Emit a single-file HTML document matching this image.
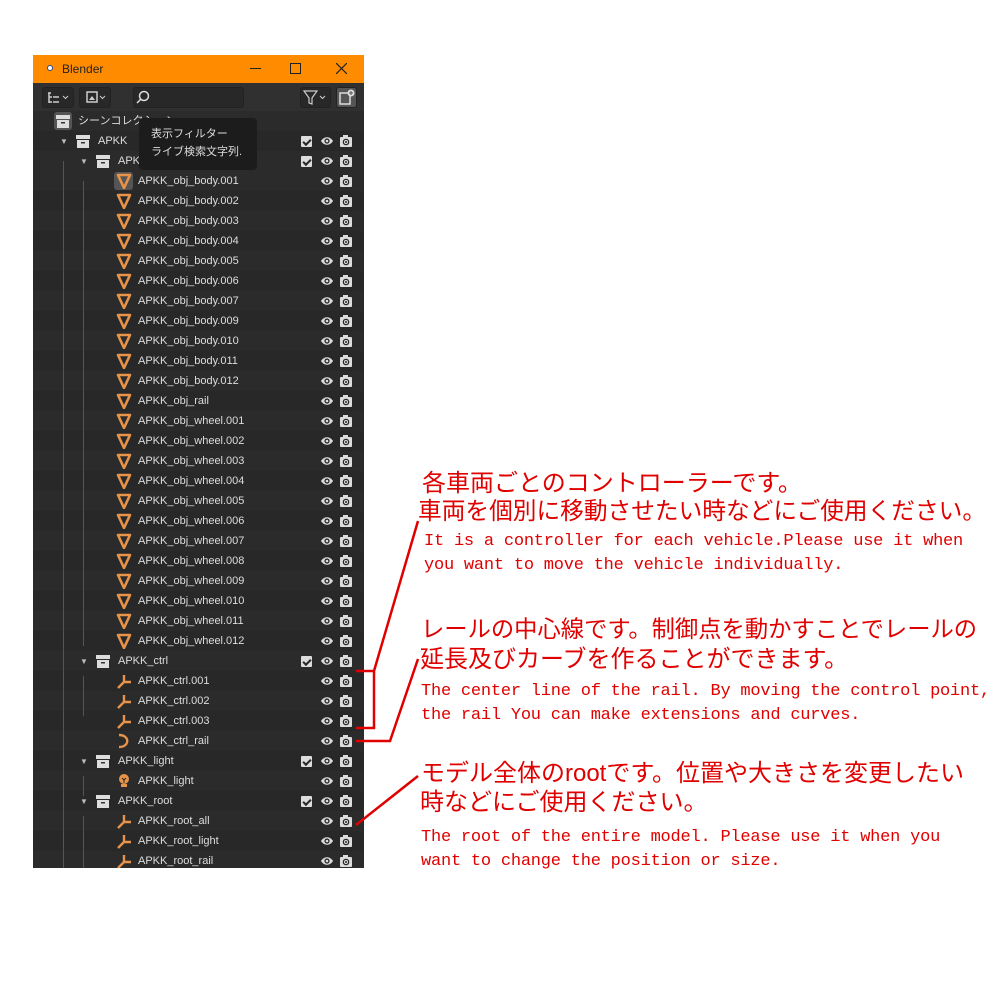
<!DOCTYPE html>
<html><head><meta charset="utf-8"><style>
body{margin:0;width:1000px;height:1000px;background:#fff;position:relative;overflow:hidden;font-family:"Liberation Sans","Noto Sans CJK JP",sans-serif}
#p{position:absolute;left:33px;top:55px;width:331px;height:813px;background:#282828;overflow:hidden}
#t{position:absolute;left:0;top:0;width:331px;height:28px;background:#ff8c00;color:#222;font-size:12px}
#h{position:absolute;left:0;top:28px;width:331px;height:28px;background:#303030}
.r{position:absolute;left:0;width:331px;height:20px;color:#ddd;font-size:11px;line-height:21px}
.r:nth-child(odd){background:#2b2b2b}
.r span{position:absolute}
.ic{position:absolute;top:2px}
.tri{position:absolute;top:0;color:#bbb;font-size:8px}
.eye{position:absolute;left:287px;top:4px}
.cam{position:absolute;left:306px;top:3px}
.chk{position:absolute;left:268px;top:5px;width:11px;height:11px;background:#ddd;border-radius:1px}
.chk:after{content:"";position:absolute;left:2px;top:3px;width:6px;height:3px;border-left:2px solid #282828;border-bottom:2px solid #282828;transform:rotate(-45deg)}
.vl{position:absolute;width:1px;background:#555}
.btn{position:absolute;top:4px;height:19px;background:#282828;border-radius:3px;border:1px solid #222}
.jp{position:absolute;color:#e00000;font-size:24px;font-family:"Liberation Sans","Noto Sans CJK JP",sans-serif;white-space:nowrap;line-height:29px}
.en{position:absolute;color:#e00000;font-size:17px;font-family:"Liberation Mono",monospace;white-space:nowrap;line-height:24px;letter-spacing:-0.22px}
</style></head><body>
<svg width="0" height="0" style="position:absolute">
<defs>
<symbol id="mesh" viewBox="0 0 16 16"><path d="M2 2H14L8 15Z" fill="none" stroke="#e8934a" stroke-width="2.6" stroke-linejoin="round"/></symbol>
<symbol id="emp" viewBox="0 0 16 16"><path d="M8 9V2M8 9H15M8 9L2 15" fill="none" stroke="#e8934a" stroke-width="2.4"/></symbol>
<symbol id="crv" viewBox="0 0 16 16"><path d="M3 2C14 2 14 14 3 14" fill="none" stroke="#e8934a" stroke-width="2.4"/></symbol>
<symbol id="lgt" viewBox="0 0 16 16"><circle cx="8" cy="6" r="5" fill="#e8934a"/><rect x="5" y="11" width="6" height="3" fill="#e8934a"/><path d="M6 5L8 7L10 5M8 7V10" stroke="#282828" stroke-width="1" fill="none"/></symbol>
<symbol id="col" viewBox="0 0 16 16"><rect x="1" y="2" width="14" height="4" fill="#ddd"/><rect x="2" y="7" width="12" height="8" fill="#ddd"/><rect x="6" y="9" width="4" height="1.5" fill="#333"/></symbol>
<symbol id="eye" viewBox="0 0 14 12"><path d="M1 6C4 1 10 1 13 6C10 11 4 11 1 6Z" fill="#ddd"/><circle cx="7" cy="6" r="2.6" fill="#282828"/><circle cx="7" cy="6" r="1.3" fill="#ddd"/></symbol>
<symbol id="cam" viewBox="0 0 14 14"><rect x="1" y="3" width="12" height="10" rx="1" fill="#ddd"/><rect x="4" y="1" width="5" height="3" fill="#ddd"/><circle cx="7" cy="8" r="3.3" fill="#282828"/><circle cx="7" cy="8" r="2" fill="#ddd"/><circle cx="7" cy="8" r="1" fill="#282828"/></symbol>
</defs></svg>

<div id="p">
<div id="t"><span style="position:absolute;left:14px;top:10px;width:6px;height:6px;border-radius:50%;background:#fff;border:1px solid #2a4a9a;box-sizing:border-box"></span><span style="position:absolute;left:29px;top:7px">Blender</span>
<span style="position:absolute;left:217px;top:13px;width:11px;height:1px;background:#222"></span>
<span style="position:absolute;left:257px;top:8px;width:9px;height:9px;border:1px solid #222"></span>
<svg style="position:absolute;left:303px;top:8px" width="11" height="11"><path d="M0 0L11 11M11 0L0 11" stroke="#222" stroke-width="1.2"/></svg></div>
<div id="h">
<div class="btn" style="left:9px;width:30px"><svg width="30" height="19"><path d="M5 5h3M6 5v10M6 9h3M6 14h3M10 9h6M10 14h6" stroke="#ccc" stroke-width="1.5" fill="none"/><path d="M20 8l2.5 2.5L25 8" stroke="#ccc" fill="none"/></svg></div>
<div class="btn" style="left:46px;width:30px"><svg width="30" height="19"><rect x="7" y="4" width="10" height="10" fill="none" stroke="#ccc" stroke-width="1.5"/><path d="M9 12l3-4 3 4z" fill="#ccc"/><path d="M20 8l2.5 2.5L25 8" stroke="#ccc" fill="none"/></svg></div>
<div class="btn" style="left:100px;width:109px"><svg width="20" height="19"><circle cx="10" cy="8" r="4.5" stroke="#ddd" stroke-width="1.5" fill="none"/><path d="M7 11l-4 4" stroke="#ddd" stroke-width="1.5"/></svg></div>
<div class="btn" style="left:267px;width:29px"><svg width="29" height="19"><path d="M3 3h13l-5 7v6l-3-1v-5z" stroke="#ccc" stroke-width="1.2" fill="none"/><path d="M19 8l2.5 2.5L24 8" stroke="#ccc" fill="none"/></svg></div>
<div class="btn" style="left:303px;width:19px;background:#555"><svg width="19" height="19"><rect x="3" y="5" width="10" height="11" fill="none" stroke="#ddd" stroke-width="1.5"/><circle cx="14" cy="5" r="3.5" fill="#ddd"/><path d="M12 5h4M14 3v4" stroke="#555"/></svg></div>
</div>

<div style="position:absolute;left:0;top:56px;width:331px">
<div class="r" style="top:0"><div class="ic" style="left:21px;top:1px;width:18px;height:18px;background:#555;border-radius:3px"><svg width="18" height="18" style="position:absolute;left:1px;top:1px"><use href="#col" width="16" height="16"/></svg></div><span style="left:45px">シーンコレクション</span></div>
<div class="r" style="top:20px"><span class="tri" style="left:27px">▼</span><svg class="ic" style="left:42px" width="16" height="16"><use href="#col"/></svg><span style="left:65px">APKK</span><div class="chk"></div><svg class="eye" width="14" height="12"><use href="#eye"/></svg><svg class="cam" width="14" height="14"><use href="#cam"/></svg></div>
<div class="r" style="top:40px"><span class="tri" style="left:47px">▼</span><svg class="ic" style="left:62px" width="16" height="16"><use href="#col"/></svg><span style="left:85px">APKK_obj</span><div class="chk"></div><svg class="eye" width="14" height="12"><use href="#eye"/></svg><svg class="cam" width="14" height="14"><use href="#cam"/></svg></div>
</div>

<div id="rows" style="position:absolute;left:0;top:116px;width:331px">
<div class="r" style="top:0"><div class="ic" style="left:81px;top:1px;width:19px;height:18px;background:#555;border-radius:3px"></div><svg class="ic" style="left:83px" width="16" height="16"><use href="#mesh"/></svg><span style="left:105px">APKK_obj_body.001</span><svg class="eye" width="14" height="12"><use href="#eye"/></svg><svg class="cam" width="14" height="14"><use href="#cam"/></svg></div>
<div class="r" style="top:20px"><svg class="ic" style="left:83px" width="16" height="16"><use href="#mesh"/></svg><span style="left:105px">APKK_obj_body.002</span><svg class="eye" width="14" height="12"><use href="#eye"/></svg><svg class="cam" width="14" height="14"><use href="#cam"/></svg></div>
<div class="r" style="top:40px"><svg class="ic" style="left:83px" width="16" height="16"><use href="#mesh"/></svg><span style="left:105px">APKK_obj_body.003</span><svg class="eye" width="14" height="12"><use href="#eye"/></svg><svg class="cam" width="14" height="14"><use href="#cam"/></svg></div>
<div class="r" style="top:60px"><svg class="ic" style="left:83px" width="16" height="16"><use href="#mesh"/></svg><span style="left:105px">APKK_obj_body.004</span><svg class="eye" width="14" height="12"><use href="#eye"/></svg><svg class="cam" width="14" height="14"><use href="#cam"/></svg></div>
<div class="r" style="top:80px"><svg class="ic" style="left:83px" width="16" height="16"><use href="#mesh"/></svg><span style="left:105px">APKK_obj_body.005</span><svg class="eye" width="14" height="12"><use href="#eye"/></svg><svg class="cam" width="14" height="14"><use href="#cam"/></svg></div>
<div class="r" style="top:100px"><svg class="ic" style="left:83px" width="16" height="16"><use href="#mesh"/></svg><span style="left:105px">APKK_obj_body.006</span><svg class="eye" width="14" height="12"><use href="#eye"/></svg><svg class="cam" width="14" height="14"><use href="#cam"/></svg></div>
<div class="r" style="top:120px"><svg class="ic" style="left:83px" width="16" height="16"><use href="#mesh"/></svg><span style="left:105px">APKK_obj_body.007</span><svg class="eye" width="14" height="12"><use href="#eye"/></svg><svg class="cam" width="14" height="14"><use href="#cam"/></svg></div>
<div class="r" style="top:140px"><svg class="ic" style="left:83px" width="16" height="16"><use href="#mesh"/></svg><span style="left:105px">APKK_obj_body.009</span><svg class="eye" width="14" height="12"><use href="#eye"/></svg><svg class="cam" width="14" height="14"><use href="#cam"/></svg></div>
<div class="r" style="top:160px"><svg class="ic" style="left:83px" width="16" height="16"><use href="#mesh"/></svg><span style="left:105px">APKK_obj_body.010</span><svg class="eye" width="14" height="12"><use href="#eye"/></svg><svg class="cam" width="14" height="14"><use href="#cam"/></svg></div>
<div class="r" style="top:180px"><svg class="ic" style="left:83px" width="16" height="16"><use href="#mesh"/></svg><span style="left:105px">APKK_obj_body.011</span><svg class="eye" width="14" height="12"><use href="#eye"/></svg><svg class="cam" width="14" height="14"><use href="#cam"/></svg></div>
<div class="r" style="top:200px"><svg class="ic" style="left:83px" width="16" height="16"><use href="#mesh"/></svg><span style="left:105px">APKK_obj_body.012</span><svg class="eye" width="14" height="12"><use href="#eye"/></svg><svg class="cam" width="14" height="14"><use href="#cam"/></svg></div>
<div class="r" style="top:220px"><svg class="ic" style="left:83px" width="16" height="16"><use href="#mesh"/></svg><span style="left:105px">APKK_obj_rail</span><svg class="eye" width="14" height="12"><use href="#eye"/></svg><svg class="cam" width="14" height="14"><use href="#cam"/></svg></div>
<div class="r" style="top:240px"><svg class="ic" style="left:83px" width="16" height="16"><use href="#mesh"/></svg><span style="left:105px">APKK_obj_wheel.001</span><svg class="eye" width="14" height="12"><use href="#eye"/></svg><svg class="cam" width="14" height="14"><use href="#cam"/></svg></div>
<div class="r" style="top:260px"><svg class="ic" style="left:83px" width="16" height="16"><use href="#mesh"/></svg><span style="left:105px">APKK_obj_wheel.002</span><svg class="eye" width="14" height="12"><use href="#eye"/></svg><svg class="cam" width="14" height="14"><use href="#cam"/></svg></div>
<div class="r" style="top:280px"><svg class="ic" style="left:83px" width="16" height="16"><use href="#mesh"/></svg><span style="left:105px">APKK_obj_wheel.003</span><svg class="eye" width="14" height="12"><use href="#eye"/></svg><svg class="cam" width="14" height="14"><use href="#cam"/></svg></div>
<div class="r" style="top:300px"><svg class="ic" style="left:83px" width="16" height="16"><use href="#mesh"/></svg><span style="left:105px">APKK_obj_wheel.004</span><svg class="eye" width="14" height="12"><use href="#eye"/></svg><svg class="cam" width="14" height="14"><use href="#cam"/></svg></div>
<div class="r" style="top:320px"><svg class="ic" style="left:83px" width="16" height="16"><use href="#mesh"/></svg><span style="left:105px">APKK_obj_wheel.005</span><svg class="eye" width="14" height="12"><use href="#eye"/></svg><svg class="cam" width="14" height="14"><use href="#cam"/></svg></div>
<div class="r" style="top:340px"><svg class="ic" style="left:83px" width="16" height="16"><use href="#mesh"/></svg><span style="left:105px">APKK_obj_wheel.006</span><svg class="eye" width="14" height="12"><use href="#eye"/></svg><svg class="cam" width="14" height="14"><use href="#cam"/></svg></div>
<div class="r" style="top:360px"><svg class="ic" style="left:83px" width="16" height="16"><use href="#mesh"/></svg><span style="left:105px">APKK_obj_wheel.007</span><svg class="eye" width="14" height="12"><use href="#eye"/></svg><svg class="cam" width="14" height="14"><use href="#cam"/></svg></div>
<div class="r" style="top:380px"><svg class="ic" style="left:83px" width="16" height="16"><use href="#mesh"/></svg><span style="left:105px">APKK_obj_wheel.008</span><svg class="eye" width="14" height="12"><use href="#eye"/></svg><svg class="cam" width="14" height="14"><use href="#cam"/></svg></div>
<div class="r" style="top:400px"><svg class="ic" style="left:83px" width="16" height="16"><use href="#mesh"/></svg><span style="left:105px">APKK_obj_wheel.009</span><svg class="eye" width="14" height="12"><use href="#eye"/></svg><svg class="cam" width="14" height="14"><use href="#cam"/></svg></div>
<div class="r" style="top:420px"><svg class="ic" style="left:83px" width="16" height="16"><use href="#mesh"/></svg><span style="left:105px">APKK_obj_wheel.010</span><svg class="eye" width="14" height="12"><use href="#eye"/></svg><svg class="cam" width="14" height="14"><use href="#cam"/></svg></div>
<div class="r" style="top:440px"><svg class="ic" style="left:83px" width="16" height="16"><use href="#mesh"/></svg><span style="left:105px">APKK_obj_wheel.011</span><svg class="eye" width="14" height="12"><use href="#eye"/></svg><svg class="cam" width="14" height="14"><use href="#cam"/></svg></div>
<div class="r" style="top:460px"><svg class="ic" style="left:83px" width="16" height="16"><use href="#mesh"/></svg><span style="left:105px">APKK_obj_wheel.012</span><svg class="eye" width="14" height="12"><use href="#eye"/></svg><svg class="cam" width="14" height="14"><use href="#cam"/></svg></div>
<div class="r" style="top:480px"><span class="tri" style="left:47px">▼</span><svg class="ic" style="left:62px" width="16" height="16"><use href="#col"/></svg><span style="left:85px">APKK_ctrl</span><div class="chk"></div><svg class="eye" width="14" height="12"><use href="#eye"/></svg><svg class="cam" width="14" height="14"><use href="#cam"/></svg></div>
<div class="r" style="top:500px"><svg class="ic" style="left:83px" width="16" height="16"><use href="#emp"/></svg><span style="left:105px">APKK_ctrl.001</span><svg class="eye" width="14" height="12"><use href="#eye"/></svg><svg class="cam" width="14" height="14"><use href="#cam"/></svg></div>
<div class="r" style="top:520px"><svg class="ic" style="left:83px" width="16" height="16"><use href="#emp"/></svg><span style="left:105px">APKK_ctrl.002</span><svg class="eye" width="14" height="12"><use href="#eye"/></svg><svg class="cam" width="14" height="14"><use href="#cam"/></svg></div>
<div class="r" style="top:540px"><svg class="ic" style="left:83px" width="16" height="16"><use href="#emp"/></svg><span style="left:105px">APKK_ctrl.003</span><svg class="eye" width="14" height="12"><use href="#eye"/></svg><svg class="cam" width="14" height="14"><use href="#cam"/></svg></div>
<div class="r" style="top:560px"><svg class="ic" style="left:83px" width="16" height="16"><use href="#crv"/></svg><span style="left:105px">APKK_ctrl_rail</span><svg class="eye" width="14" height="12"><use href="#eye"/></svg><svg class="cam" width="14" height="14"><use href="#cam"/></svg></div>
<div class="r" style="top:580px"><span class="tri" style="left:47px">▼</span><svg class="ic" style="left:62px" width="16" height="16"><use href="#col"/></svg><span style="left:85px">APKK_light</span><div class="chk"></div><svg class="eye" width="14" height="12"><use href="#eye"/></svg><svg class="cam" width="14" height="14"><use href="#cam"/></svg></div>
<div class="r" style="top:600px"><svg class="ic" style="left:83px" width="16" height="16"><use href="#lgt"/></svg><span style="left:105px">APKK_light</span><svg class="eye" width="14" height="12"><use href="#eye"/></svg><svg class="cam" width="14" height="14"><use href="#cam"/></svg></div>
<div class="r" style="top:620px"><span class="tri" style="left:47px">▼</span><svg class="ic" style="left:62px" width="16" height="16"><use href="#col"/></svg><span style="left:85px">APKK_root</span><div class="chk"></div><svg class="eye" width="14" height="12"><use href="#eye"/></svg><svg class="cam" width="14" height="14"><use href="#cam"/></svg></div>
<div class="r" style="top:640px"><svg class="ic" style="left:83px" width="16" height="16"><use href="#emp"/></svg><span style="left:105px">APKK_root_all</span><svg class="eye" width="14" height="12"><use href="#eye"/></svg><svg class="cam" width="14" height="14"><use href="#cam"/></svg></div>
<div class="r" style="top:660px"><svg class="ic" style="left:83px" width="16" height="16"><use href="#emp"/></svg><span style="left:105px">APKK_root_light</span><svg class="eye" width="14" height="12"><use href="#eye"/></svg><svg class="cam" width="14" height="14"><use href="#cam"/></svg></div>
<div class="r" style="top:680px"><svg class="ic" style="left:83px" width="16" height="16"><use href="#emp"/></svg><span style="left:105px">APKK_root_rail</span><svg class="eye" width="14" height="12"><use href="#eye"/></svg><svg class="cam" width="14" height="14"><use href="#cam"/></svg></div>
</div>
<div class="vl" style="left:30px;top:106px;height:707px"></div>
<div class="vl" style="left:50px;top:126px;height:465px"></div>
<div class="vl" style="left:50px;top:621px;height:40px"></div>
<div class="vl" style="left:50px;top:721px;height:20px"></div>
<div class="vl" style="left:50px;top:761px;height:52px"></div>
<div style="position:absolute;left:106px;top:63px;width:118px;height:52px;background:#1c1c1c;border-radius:4px;color:#ddd;font-size:11px;line-height:18px;padding:7px 0 0 12px;box-sizing:border-box">表示フィルター<br>ライブ検索文字列.</div>
</div>

<svg style="position:absolute;left:0;top:0" width="1000" height="1000">
<g stroke="#e00000" stroke-width="2.5" fill="none">
<path d="M356 671H374V728H356M374 671L418 521"/>
<path d="M356 741H390L418 659"/>
<path d="M356 825L418 776"/>
</g></svg>

<div class="jp" style="left:422px;top:469px">各車両ごとのコントローラーです。</div>
<div class="jp" style="left:418px;top:498px;font-size:23.7px">車両を個別に移動させたい時などにご使用ください。</div>
<div class="en" style="left:424px;top:530px">It is a controller for each vehicle.Please use it when</div>
<div class="en" style="left:424px;top:554px">you want to move the vehicle individually.</div>
<div class="jp" style="left:421px;top:615px;font-size:23.3px">レールの中心線です。制御点を動かすことでレールの</div>
<div class="jp" style="left:420px;top:645px">延長及びカーブを作ることができます。</div>
<div class="en" style="left:421px;top:680px">The center line of the rail. By moving the control point,</div>
<div class="en" style="left:421px;top:704px">the rail You can make extensions and curves.</div>
<div class="jp" style="left:421px;top:759px">モデル全体のrootです。位置や大きさを変更したい</div>
<div class="jp" style="left:420px;top:788px">時などにご使用ください。</div>
<div class="en" style="left:421px;top:826px">The root of the entire model. Please use it when you</div>
<div class="en" style="left:421px;top:850px">want to change the position or size.</div>
</body></html>
